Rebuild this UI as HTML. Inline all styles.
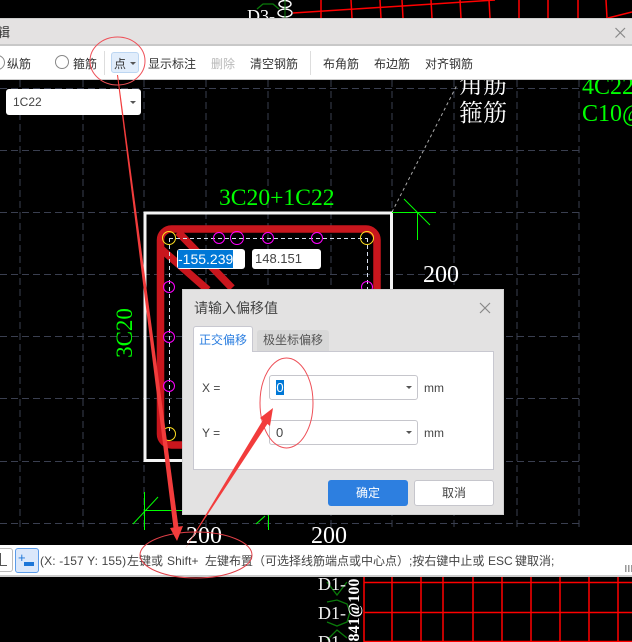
<!DOCTYPE html>
<html><head><meta charset="utf-8"><style>
html,body{margin:0;padding:0;background:#000;}
#r{position:relative;width:632px;height:642px;overflow:hidden;background:#000;font-family:"Liberation Sans","Noto Sans CJK SC",sans-serif;color:#333;font-size:12px;}
.a{position:absolute;white-space:nowrap;}
.t{top:56px;line-height:16px;}
.s{top:553px;line-height:16px;color:#444;}
.box{background:#fff;border:1px solid #c6c6cc;border-radius:3px;box-sizing:border-box;}
.tri{position:absolute;width:0;height:0;border-left:3px solid transparent;border-right:3px solid transparent;border-top:3px solid #555;}
svg{position:absolute;left:0;top:0;}
</style></head><body><div id="r">
<svg width="632" height="642" viewBox="0 0 632 642">
<g stroke="#3a3f50" stroke-width="1" stroke-dasharray="7 4" fill="none">
<path d="M20 80V530M83 80V530M144 80V530M206 80V530M268 80V530M331 80V530M392 80V530M454 80V530M517 80V530M579 80V530"/>
<path d="M0 88.5H579M0 150.5H579M0 212.5H579M0 274.5H579M0 336.5H579M0 398.5H579M0 461.5H579M0 523.5H579"/>
</g>
<g stroke="#f00" stroke-width="1.5" fill="none">
<path d="M293 13L495 0M608 18L632 12"/>
<path d="M321 18V0M352 18L351 0M381 18L380 0M403 18L402 0M432 18L431 0M461 18L460 0M490 18L489 0M519 18V0M548 18V0M578 18V0M607 18L606 0"/>
<path d="M364 577V642M392 577V642M421 577V642M443 577V642M473 577V642M502 577V642M531 577V642M560 577V642M589 577V642M618 577V642M364 582.5H632M364 612.5H632M364 641.5H632"/>
</g>
<g stroke="#0a7a0a" stroke-width="1.3" fill="none">
<path d="M257 9L263 4H273L279 9M327 582L337 595L347 582M327 602L337 600L347 604L350 612L347 622L337 626L327 622M327 640L337 630L347 638"/>
</g>
<g stroke="#fff" stroke-width="1.400" fill="#000">
<ellipse cx="285" cy="4" rx="6" ry="3.500"/><ellipse cx="285" cy="13" rx="7" ry="4"/>
</g>
<path d="M285 0V18" stroke="#0a7a0a" stroke-width="1"/>
<path d="M392 212L457 85" stroke="#aaa" stroke-width="1" stroke-dasharray="3 3" fill="none"/>
<rect x="145" y="213" width="246.500" height="247.500" fill="none" stroke="#f4f4f4" stroke-width="3"/>
<g stroke="#0f0" stroke-width="1" fill="none">
<path d="M392 212.500H436M417.500 212V240M404 199L430 225"/>
<path d="M144 510.500H183M144.500 492V530M133 524L158 497M268.500 515V530M256 524L265 516"/>
</g>
<g stroke="#c8161d" fill="none" stroke-width="7.500">
<rect x="160.500" y="229" width="216.500" height="216" rx="11"/>
<path d="M178 232L232 288M160 248L208 290"/>
</g>
<g stroke="#d8e0f0" stroke-width="1" stroke-dasharray="4 3" fill="none">
<path d="M169 238.500H367M169.500 238V434M367.500 238V434"/>
</g>
<g fill="none" stroke="#f0f" stroke-width="1">
<circle cx="219" cy="238" r="5.500"/><circle cx="237" cy="238" r="6.500"/><circle cx="268" cy="238" r="5.500"/><circle cx="317" cy="238" r="5.500"/>
<circle cx="169" cy="287" r="5.500"/><circle cx="367" cy="287" r="5.500"/><circle cx="169" cy="337" r="5.500"/><circle cx="169" cy="386" r="5.500"/>
</g>
<g fill="none" stroke="#ffdf20" stroke-width="1">
<circle cx="169" cy="238" r="6.500"/><circle cx="367" cy="238" r="6.500"/><circle cx="169" cy="434" r="6.500"/>
</g>
</svg>

<div class="a" style="left:247px;top:5px;font:18px/22px 'Liberation Serif',serif;color:#fff;">D3-</div>
<div class="a" style="left:459px;top:71px;font:24px/30px 'Liberation Serif','Noto Serif CJK SC',serif;color:#fff;">角筋</div>
<div class="a" style="left:459px;top:99px;font:24px/30px 'Liberation Serif','Noto Serif CJK SC',serif;color:#fff;">箍筋</div>
<div class="a" style="left:582px;top:72px;font:24px/30px 'Liberation Serif',serif;color:#0f0;">4C22</div>
<div class="a" style="left:582px;top:99px;font:24px/30px 'Liberation Serif',serif;color:#0f0;">C10@</div>
<div class="a" style="left:219px;top:184px;font:23.600px/28px 'Liberation Serif',serif;color:#0f0;">3C20+1C22</div>
<div class="a" style="left:423px;top:261px;font:24px/28px 'Liberation Serif',serif;color:#fff;">200</div>
<div class="a" style="left:100px;top:319px;width:50px;text-align:center;font:23px/28px 'Liberation Serif',serif;color:#0f0;transform:rotate(-90deg);">3C20</div>
<div class="a" style="left:186px;top:522px;font:24px/28px 'Liberation Serif',serif;color:#fff;">200</div>
<div class="a" style="left:311px;top:522px;font:24px/28px 'Liberation Serif',serif;color:#fff;">200</div>
<div class="a" style="left:318px;top:573px;font:18px/22px 'Liberation Serif',serif;color:#eee;">D1-</div>
<div class="a" style="left:318px;top:602px;font:18px/22px 'Liberation Serif',serif;color:#eee;">D1-</div>
<div class="a" style="left:318px;top:631px;font:18px/22px 'Liberation Serif',serif;color:#eee;">D1</div>
<div class="a" style="left:315px;top:601px;width:80px;text-align:center;font:bold 16px/18px 'Liberation Serif',serif;color:#fff;transform:rotate(-90deg);">841@100</div>

<div class="a" style="left:177px;top:249px;width:68px;height:20px;background:#fff;border-radius:3px;font-size:14px;line-height:20px;">
<span style="position:absolute;left:1px;top:1px;height:18px;line-height:18px;background:#0078d7;color:#fff;">-155.239</span></div>
<div class="a" style="left:252px;top:249px;width:69px;height:20px;background:#fff;border-radius:3px;font-size:13px;line-height:20px;text-indent:3px;color:#444;">148.151</div>

<!-- title bar -->
<div class="a" style="left:0;top:18px;width:632px;height:28px;background:#e4e2e2;border-top:1px solid #ccc;box-sizing:border-box;border-bottom:2px solid #c8c8c8;"></div>
<div class="a" style="left:-3px;top:25px;font-size:13px;line-height:16px;">辑</div>
<svg width="632" height="642" style="pointer-events:none"><path d="M615.500 28L625 37.500M625 28L615.500 37.500" stroke="#888" stroke-width="1.200" fill="none"/></svg>
<!-- toolbar -->
<div class="a" style="left:0;top:46px;width:632px;height:34px;background:#fff;border-bottom:1px solid #ccc;box-sizing:border-box;"></div>
<div class="a" style="left:-10px;top:55px;width:13px;height:13px;border:1px solid #888;border-radius:50%;"></div>
<div class="a t" style="left:7px;">纵筋</div>
<div class="a" style="left:55px;top:55px;width:12px;height:12px;border:1px solid #888;border-radius:50%;"></div>
<div class="a t" style="left:73px;">箍筋</div>
<div class="a" style="left:104px;top:51px;width:1px;height:24px;background:#ddd;"></div>
<div class="a" style="left:111px;top:52px;width:28px;height:21px;background:#e1edfb;border:1px solid #bcd6f2;border-radius:3px;box-sizing:border-box;"></div>
<div class="a t" style="left:114px;">点</div>
<div class="tri" style="left:130px;top:62px;"></div>
<div class="a t" style="left:148px;">显示标注</div>
<div class="a t" style="left:211px;color:#b8b8b8;">删除</div>
<div class="a t" style="left:250px;">清空钢筋</div>
<div class="a" style="left:310px;top:51px;width:1px;height:24px;background:#ddd;"></div>
<div class="a t" style="left:323px;">布角筋</div>
<div class="a t" style="left:374px;">布边筋</div>
<div class="a t" style="left:425px;">对齐钢筋</div>

<!-- combo -->
<div class="a" style="left:6px;top:89px;width:135px;height:26px;background:#fff;border-radius:3px;"></div>
<div class="a" style="left:13px;top:89px;line-height:26px;font-size:12px;color:#444;">1C22</div>
<div class="tri" style="left:130px;top:101px;"></div>

<!-- dialog -->
<div class="a" style="left:182px;top:289px;width:322px;height:226px;background:#e3e2e2;border:1px solid #cfcfcf;box-sizing:border-box;"></div>
<div class="a" style="left:194px;top:299px;font-size:14px;line-height:18px;color:#444;">请输入偏移值</div>
<svg width="632" height="642"><path d="M480 303L490 313M490 303L480 313" stroke="#888" stroke-width="1.200" fill="none"/></svg>
<div class="a" style="left:193px;top:351px;width:301px;height:119px;background:#fff;border:1px solid #c8c8d0;box-sizing:border-box;"></div>
<div class="a" style="left:193px;top:326px;width:60px;height:26px;background:#fff;border:1px solid #c8c8d0;border-bottom:none;border-radius:3px 3px 0 0;box-sizing:border-box;text-align:center;line-height:26px;color:#2d7fe0;">正交偏移</div>
<div class="a" style="left:257px;top:330px;width:72px;height:21px;background:#d8d8d8;border-radius:3px 3px 0 0;text-align:center;line-height:21px;color:#555;">极坐标偏移</div>
<div class="a" style="left:202px;top:380px;font-size:12px;line-height:16px;color:#444;">X =</div>
<div class="a" style="left:202px;top:425px;font-size:12px;line-height:16px;color:#444;">Y =</div>
<div class="a box" style="left:269px;top:375px;width:149px;height:25px;"></div>
<div class="a" style="left:276px;top:380px;height:15px;width:8px;background:#0078d7;color:#fff;font-size:13px;line-height:15px;text-align:center;">0</div>
<div class="tri" style="left:406px;top:386px;"></div>
<div class="a box" style="left:269px;top:420px;width:149px;height:25px;"></div>
<div class="a" style="left:276px;top:425px;color:#444;font-size:13px;line-height:15px;">0</div>
<div class="tri" style="left:406px;top:431px;"></div>
<div class="a" style="left:424px;top:380px;font-size:12px;line-height:16px;color:#444;">mm</div>
<div class="a" style="left:424px;top:425px;font-size:12px;line-height:16px;color:#444;">mm</div>
<div class="a" style="left:328px;top:480px;width:80px;height:26px;background:#2d7fe0;border-radius:3px;color:#fff;text-align:center;line-height:26px;">确定</div>
<div class="a box" style="left:414px;top:480px;width:80px;height:26px;text-align:center;line-height:24px;color:#444;">取消</div>

<!-- status -->
<div class="a" style="left:0;top:545px;width:632px;height:32px;background:#fff;border-bottom:2px solid #ccc;box-sizing:border-box;"></div>
<div class="a box" style="left:-4px;top:548px;width:17px;height:24px;background:#fff;border-color:#bbb;"></div>
<div class="a" style="left:0;top:553px;width:7px;height:13px;border-left:1px solid #555;border-bottom:1px solid #555;box-sizing:border-box;"></div>
<div class="a" style="left:15px;top:548px;width:24px;height:25px;background:#dbe8fb;border:1px solid #5b9cea;border-radius:3px;box-sizing:border-box;"></div>
<div class="a" style="left:18px;top:552px;font-size:13px;line-height:12px;color:#1c76d8;">+</div>
<div class="a" style="left:24px;top:562px;width:10px;height:4px;background:#1c76d8;"></div>
<div class="a s" style="left:40px;letter-spacing:.15px;">(X: -157 Y: 155)</div>
<div class="a s" style="left:127px;">左键或</div>
<div class="a s" style="left:167px;letter-spacing:.1px;">Shift+</div>
<div class="a s" style="left:205px;">左键布置</div>
<div class="a s" style="left:253px;">（可选择线筋端点或中心点）</div>
<div class="a s" style="left:409px;">;按右键中止或</div>
<div class="a s" style="left:488px;">ESC</div>
<div class="a s" style="left:515px;">键取消;</div>
<div class="a" style="left:625px;top:565px;width:7px;height:7px;background:repeating-linear-gradient(90deg,#999 0 1.500px,transparent 1.500px 3px);"></div>

<!-- annotations -->
<svg width="632" height="642" fill="none">
<ellipse cx="117.500" cy="61" rx="27.500" ry="24" stroke="#ee5058" stroke-width="1"/>
<ellipse cx="286.500" cy="403" rx="26.500" ry="45" stroke="#ee5058" stroke-width="1"/>
<ellipse cx="196" cy="555" rx="56" ry="23" stroke="#e04048" stroke-width="1"/>
<path d="M117 75L174 532L179 531L118 75Z" fill="#f23c3c"/>
<path d="M177 541L170 528L183 526Z" fill="#f23c3c"/>
<path d="M185 549L263 420L268 423Z" fill="#f23c3c"/>
<path d="M273 408L260 418L270 426Z" fill="#f23c3c"/>
</svg>
</div></body></html>
